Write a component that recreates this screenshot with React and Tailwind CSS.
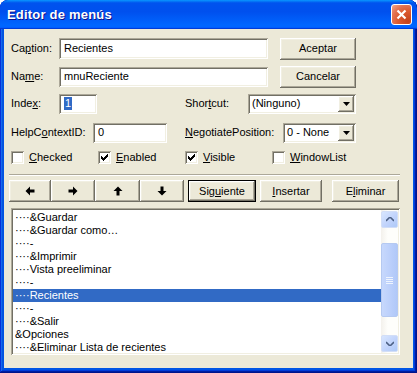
const raised = 'shadow-[inset_-1px_-1px_#716f64,inset_1px_1px_#ffffff,inset_-2px_-2px_#aca899,inset_2px_2px_#f1efe2] bg-[#ece9d8]'
const sunken = 'shadow-[inset_1px_1px_#aca899,inset_-1px_-1px_#ffffff,inset_2px_2px_#716f64,inset_-2px_-2px_#f1efe2] bg-white'

const font = { fontFamily: '"Liberation Sans", Arial, sans-serif' }

function Label({ w, children }) {
  return <div className={`shrink-0 ${w}`}>{children}</div>
}

function TextBox({ w, h = 'h-[21px]', children }) {
  return (
    <div className={`${w} ${h} ${sunken} shrink-0 flex items-center pl-[5px]`}>{children}</div>
  )
}

function Button({ w, def, children }) {
  if (def) {
    return (
      <div className={`${w} h-[22px] shrink-0 border border-black`}>
        <div className={`h-full w-full ${raised} flex items-center justify-center`}>{children}</div>
      </div>
    )
  }
  return <div className={`${w} h-[22px] shrink-0 ${raised} flex items-center justify-center`}>{children}</div>
}

function Combo({ w, children }) {
  return (
    <div className={`${w} h-[20px] ${sunken} shrink-0 flex items-center pl-[4px] pr-[2px]`}>
      <div className="flex-1">{children}</div>
      <div className={`w-[16px] h-[16px] ${raised} flex items-center justify-center`}>
        <svg width="7" height="4" viewBox="0 0 7 4"><path d="M0 0h7L3.5 4z" fill="#000" /></svg>
      </div>
    </div>
  )
}

function Check({ on, children }) {
  return (
    <div className="w-[87px] shrink-0 flex items-center">
      <div className={`w-[13px] h-[13px] ${sunken} flex items-center justify-center`}>
        {on && (
          <svg width="7" height="7" viewBox="0 0 7 7"><path d="M0 2h1v1h1v1h1V3h1V2h1V1h1V0h1v3H6v1H5v1H4v1H3v1H2V6H1V5H0z" fill="#000" /></svg>
        )}
      </div>
      <span className="ml-[5px]">{children}</span>
    </div>
  )
}

function Arrow({ dir }) {
  const rot = { left: 'rotate-0', right: 'rotate-180', up: 'rotate-90', down: '-rotate-90' }[dir]
  return (
    <svg width="10" height="10" viewBox="0 0 10 10" className={rot}>
      <path d="M0.5 5L5 0.5v3h4.5v3H5v3z" fill="#000" />
    </svg>
  )
}

const items = [
  '····&Guardar',
  '····&Guardar como…',
  '····-',
  '····&Imprimir',
  '····Vista preeliminar',
  '····-',
  '····Recientes',
  '····-',
  '····&Salir',
  '&Opciones',
  '····&Eliminar Lista de recientes',
]

function ScrollBtn({ up }) {
  return (
    <div className="h-[17px] w-[17px] rounded-[2px] border border-[#d2def7] bg-[linear-gradient(135deg,#d8e6ff,#bfd2fb_60%,#aecaf8)] flex items-center justify-center">
      <svg width="8" height="5" viewBox="0 0 8 5" className={up ? '' : 'rotate-180'}>
        <path d="M0 4l4-4 4 4" stroke="#4d6185" strokeWidth="1.6" fill="none" />
      </svg>
    </div>
  )
}

export default function App() {
  return (
    <div className="w-[417px] h-[373px] bg-white text-[11px] leading-[13px] text-black" style={font}>
      <div className="w-full h-full flex flex-col rounded-t-[8px] overflow-hidden bg-[#0055e5] shadow-[inset_-1px_-1px_#00138c,inset_1px_1px_#0831d9,inset_-2px_-2px_#001ea0,inset_2px_2px_#166aee,inset_-3px_-3px_#003bda,inset_3px_3px_#0855dd]">
        <div className="h-[29px] shrink-0 flex items-center pl-[7px] pr-[5px] bg-[linear-gradient(180deg,#0997ff,#0053ee_10%,#0050ee_40%,#0066ff_86%,#0066ff_92%,#005bff_95%,#003dd7_97%,#003dd7)] rounded-t-[8px]">
          <div className="flex-1 text-white font-bold text-[13px] tracking-[0.2px] [text-shadow:1px_1px_#0f1089]">Editor de menús</div>
          <div className="w-[21px] h-[21px] rounded-[3px] border border-white bg-[radial-gradient(circle_at_85%_85%,#c4421b,#dc5a30_45%,#e37352_70%,#f3a88c)] flex items-center justify-center">
            <svg width="11" height="11" viewBox="0 0 11 11"><path d="M1.5 1.5l8 8M9.5 1.5l-8 8" stroke="#fff" strokeWidth="2.2" /></svg>
          </div>
        </div>
        <div className="flex-1 mx-[4px] mb-[5px] bg-[#ece9d8] flex flex-col pl-[7px]">
          <div className="mt-[8px] h-[23px] flex items-center">
            <Label w="w-[48px]">Ca<u>p</u>tion:</Label>
            <TextBox w="w-[209px]">Recientes</TextBox>
            <div className="ml-[12px]"><Button w="w-[76px]">Aceptar</Button></div>
          </div>
          <div className="mt-[5px] h-[23px] flex items-center">
            <Label w="w-[48px]">Na<u>m</u>e:</Label>
            <TextBox w="w-[209px]" h="h-[20px]">mnuReciente</TextBox>
            <div className="ml-[12px]"><Button w="w-[76px]">Cancelar</Button></div>
          </div>
          <div className="mt-[5px] h-[21px] flex items-center">
            <Label w="w-[48px]">Inde<u>x</u>:</Label>
            <TextBox w="w-[38px]" h="h-[20px]"><span className="bg-[#316ac5] text-white px-[1px]">1</span></TextBox>
            <div className="ml-[88px]"><Label w="w-[63px]">Shor<u>t</u>cut:</Label></div>
            <Combo w="w-[108px]">(Ninguno)</Combo>
          </div>
          <div className="mt-[8px] h-[21px] flex items-center">
            <Label w="w-[82px]">HelpC<u>o</u>ntextID:</Label>
            <TextBox w="w-[74px]" h="h-[20px]">0</TextBox>
            <div className="ml-[18px]"><Label w="w-[98px]"><u>N</u>egotiatePosition:</Label></div>
            <Combo w="w-[73px]">0 - None</Combo>
          </div>
          <div className="mt-[7px] h-[15px] flex items-center">
            <Check><u>C</u>hecked</Check>
            <Check on><u>E</u>nabled</Check>
            <Check on><u>V</u>isible</Check>
            <Check><u>W</u>indowList</Check>
          </div>
          <div className="mt-[9px] -ml-[2px] w-[391px] h-[2px] border-t border-t-[#aca899] border-b border-b-white" />
          <div className="mt-[4px] -ml-[2px] h-[22px] flex">
            <Button w="w-[42px]"><Arrow dir="left" /></Button>
            <Button w="w-[44px]"><Arrow dir="right" /></Button>
            <Button w="w-[45px]"><Arrow dir="up" /></Button>
            <Button w="w-[44px]"><Arrow dir="down" /></Button>
            <div className="ml-[4px]"><Button w="w-[68px]" def>Sig<u>u</u>iente</Button></div>
            <div className="ml-[4px]"><Button w="w-[62px]"><u>I</u>nsertar</Button></div>
            <div className="ml-[10px]"><Button w="w-[67px]">E<u>l</u>iminar</Button></div>
          </div>
          <div className={`mt-[6px] w-[389px] h-[147px] ${sunken} p-[2px] flex`}>
            <div className="flex-1 overflow-hidden pt-[1px]">
              {items.map((t, i) => (
                <div key={i} className={`h-[13px] pl-[2px] whitespace-nowrap ${i === 6 ? 'bg-[#316ac5] text-white' : ''}`}>{t}</div>
              ))}
            </div>
            <div className="w-[17px] flex flex-col bg-[linear-gradient(90deg,#f3f1ec,#fefefb_40%,#fefefb)] pt-[1px] pb-[1px]">
              <ScrollBtn up />
              <div className="flex-1 relative">
                <div className="mt-[15px] h-[74px] rounded-[2px] border border-[#b5c9f1] bg-[linear-gradient(90deg,#c7d8fc,#bcd0fb_50%,#b0c8f8)] flex flex-col items-center justify-center gap-[1px]">
                  {[0, 1, 2, 3].map(k => <div key={k} className="w-[7px] h-[1px] bg-[#eef4fe]" />)}
                </div>
              </div>
              <ScrollBtn />
            </div>
          </div>
        </div>
      </div>
    </div>
  )
}
